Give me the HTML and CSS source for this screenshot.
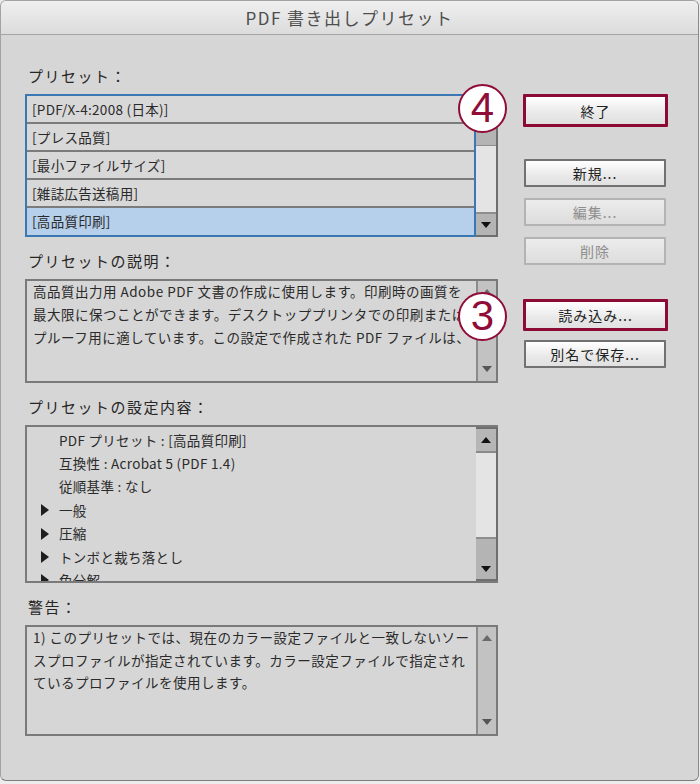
FILE: index.html
```html
<!DOCTYPE html>
<html lang="ja">
<head>
  <meta charset="UTF-8" />
  <title>PDF 書き出しプリセット</title>
  <link rel="stylesheet" href="styles.css">
</head>
<body>

  <div class="window">
    <div class="titlebar">PDF 書き出しプリセット</div>

    <div class="content">
      <div class="left-col">

        <!-- Presets -->
        <div class="label">プリセット：</div>
        <div class="preset-list">
          <div class="preset-rows">
            <div class="row">[PDF/X-4:2008 (日本)]</div>
            <div class="row">[プレス品質]</div>
            <div class="row">[最小ファイルサイズ]</div>
            <div class="row">[雑誌広告送稿用]</div>
            <div class="row selected">[高品質印刷]</div>
          </div>
          <div class="scroll dark">
            <div class="thumb-top"></div>
            <div class="track"></div>
            <div class="btn-down"><span class="arrow down"></span></div>
          </div>
        </div>

        <!-- Description -->
        <div class="label section">プリセットの説明：</div>
        <div class="textbox desc">
          <div class="textbody">
            <div class="line">高品質出力用 Adobe PDF 文書の作成に使用します。印刷時の画質を</div>
            <div class="line">最大限に保つことができます。デスクトッププリンタでの印刷または</div>
            <div class="line">プルーフ用に適しています。この設定で作成された PDF ファイルは、</div>
          </div>
          <div class="scroll plain">
            <span class="arrow up small"></span>
            <span class="arrow down small"></span>
          </div>
        </div>

        <!-- Settings -->
        <div class="label section">プリセットの設定内容：</div>
        <div class="textbox settings">
          <div class="textbody tree">
            <div class="item">PDF プリセット : [高品質印刷]</div>
            <div class="item">互換性 : Acrobat 5 (PDF 1.4)</div>
            <div class="item">従順基準 : なし</div>
            <div class="item"><span class="tri"></span>一般</div>
            <div class="item"><span class="tri"></span>圧縮</div>
            <div class="item"><span class="tri"></span>トンボと裁ち落とし</div>
            <div class="item"><span class="tri"></span>色分解</div>
          </div>
          <div class="scroll dark">
            <div class="btn-up"><span class="arrow up"></span></div>
            <div class="track"></div>
            <div class="btn-down tall"><span class="arrow down"></span></div>
          </div>
        </div>

        <!-- Warning -->
        <div class="label section">警告：</div>
        <div class="textbox warn">
          <div class="textbody">
            <div class="line">1) このプリセットでは、現在のカラー設定ファイルと一致しないソー</div>
            <div class="line">スプロファイルが指定されています。カラー設定ファイルで指定され</div>
            <div class="line">ているプロファイルを使用します。</div>
          </div>
          <div class="scroll plain">
            <span class="arrow up small"></span>
            <span class="arrow down small"></span>
          </div>
        </div>
      </div>

      <div class="right-col">
        <button class="btn marked first">終了</button>
        <button class="btn gap-big">新規...</button>
        <button class="btn disabled">編集...</button>
        <button class="btn disabled">削除</button>
        <button class="btn marked gap-big2">読み込み...</button>
        <button class="btn after-marked">別名で保存...</button>
      </div>

      <!-- Step markers -->
      <div class="step step-4">4</div>
      <div class="step step-3">3</div>
    </div>
  </div>

</body>
</html>
```

FILE: styles.css
```css
* {
  box-sizing: border-box;
}
body {
  margin: 0;
  background: #ececec;
  font-family: "Noto Sans CJK JP", sans-serif;
  color: #2a2a2a;
}
.window {
  width: 699px;
  height: 781px;
  background: #d6d6d6;
  border: 1px solid #a3a3a3;
  border-bottom-color: #7d7d7d;
  border-right-color: #8a8a8a;
  border-radius: 6px;
  overflow: hidden;
}
.titlebar {
  height: 34px;
  background: linear-gradient(to bottom, #efefef, #dcdcdc);
  border-bottom: 1px solid #a4a4a4;
  text-align: center;
  font-size: 17px;
  letter-spacing: 1.5px;
  line-height: 33px;
  color: #4d4d4d;
}
.content {
  position: relative;
  display: flex;
  padding: 31px 0 0 24px;
}
.left-col {
  width: 473px;
}
.label {
  height: 20px;
  line-height: 20px;
  font-size: 15px;
  letter-spacing: 1.5px;
  padding-left: 3px;
  margin-bottom: 8px;
  color: #262626;
}
.label.section {
  margin-top: 14px;
}

/* Preset list */
.preset-list {
  display: flex;
  height: 143px;
}
.preset-rows {
  flex: 1;
  border: 2px solid #3b78b3;
}
.row {
  height: 28px;
  line-height: 26px;
  border-bottom: 2px solid #7b7b7b;
  padding-left: 5px;
  font-size: 13.5px;
  letter-spacing: 0.3px;
  background: #d8d8d8;
}
.row:last-child {
  border-bottom: none;
  height: 27px;
}
.row.selected {
  background: #b6cfeb;
}

/* Scrollbars */
.scroll {
  width: 22px;
  display: flex;
  flex-direction: column;
}
.scroll.dark {
  border: 2px solid #6f6f6f;
  border-left: none;
  background: #e3e3e3;
}
.thumb-top {
  height: 50px;
  background: #b4b4b4;
  border-bottom: 1px solid #8e8e8e;
}
.btn-up {
  height: 24px;
  background: #b6b6b6;
  border-bottom: 2px solid #8a8a8a;
  display: flex;
  justify-content: center;
  padding-top: 8px;
}
.track {
  flex: 1;
  background: #e4e4e4;
}
.btn-down {
  height: 23px;
  background: #b4b4b4;
  border-top: 2px solid #8e8e8e;
  display: flex;
  justify-content: center;
  align-items: center;
}
.btn-down.tall {
  height: 42px;
  align-items: flex-end;
  padding-bottom: 7px;
}
.scroll.plain {
  width: 20px;
  background: #c2c2c2;
  border-left: 2px solid #8c8c8c;
  align-items: center;
  justify-content: space-between;
  padding: 8px 0 9px;
}
.arrow {
  width: 0;
  height: 0;
  border-left: 5px solid transparent;
  border-right: 5px solid transparent;
}
.arrow.up {
  border-bottom: 6px solid #111;
}
.arrow.down {
  border-top: 6px solid #111;
}
.arrow.small.up {
  border-bottom-color: #6a6a6a;
}
.arrow.small.down {
  border-top-color: #555;
}

/* Text boxes */
.textbox {
  display: flex;
  border: 2px solid #7a7a7a;
  border-right: none;
  background: #d6d6d6;
}
.textbox.desc {
  height: 104px;
  border-right: 2px solid #7a7a7a;
}
.textbox.settings {
  height: 158px;
}
.textbox.warn {
  height: 111px;
  border-right: 2px solid #7a7a7a;
}
.textbody {
  flex: 1;
  overflow: hidden;
  padding-left: 6px;
  font-size: 13.5px;
  letter-spacing: 0.5px;
}
.line {
  white-space: nowrap;
  height: 23px;
  line-height: 21px;
}
.warn .line {
  height: 22.5px;
}
.tree {
  padding-left: 13px;
  padding-top: 1px;
  letter-spacing: 0.3px;
}
.item {
  display: flex;
  align-items: center;
  height: 23.4px;
  padding-left: 19px;
  white-space: nowrap;
  position: relative;
}
.tri {
  position: absolute;
  left: 1px;
  top: 6px;
  width: 0;
  height: 0;
  border-top: 6px solid transparent;
  border-bottom: 6px solid transparent;
  border-left: 8px solid #1e1e1e;
}

/* Buttons */
.right-col {
  display: flex;
  flex-direction: column;
  margin-left: 25px;
  width: 145px;
}
.btn {
  height: 28px;
  width: 142px;
  margin-left: 1px;
  margin-top: 11px;
  padding: 0;
  border: 2px solid #717171;
  border-radius: 1px;
  background: linear-gradient(to bottom, #ffffff, #e9e9e9 60%, #e1e1e1);
  font-family: "Noto Sans CJK JP", sans-serif;
  font-size: 14px;
  letter-spacing: 1px;
  color: #222;
}
.btn.marked {
  width: 145px;
  margin-left: 0;
  height: 32px;
  border: 3px solid #8c0b34;
}
.btn.first {
  margin-top: 28px;
  height: 33px;
}
.btn.gap-big {
  margin-top: 32px;
}
.btn.gap-big2 {
  margin-top: 34px;
}
.btn.after-marked {
  margin-top: 9px;
}
.btn.disabled {
  border-color: #b3b3b3;
  color: #8e8e8e;
  background: linear-gradient(to bottom, #ececec, #dddddd);
}

/* Step markers */
.step {
  position: absolute;
  width: 49px;
  height: 49px;
  border-radius: 50%;
  border: 2.5px solid #8f0d36;
  background: #fff;
  color: #8f0d36;
  font-family: "Liberation Sans", sans-serif;
  font-size: 42px;
  line-height: 44px;
  text-align: center;
}
.step-4 {
  left: 457px;
  top: 49px;
}
.step-3 {
  left: 457px;
  top: 257px;
}
```
